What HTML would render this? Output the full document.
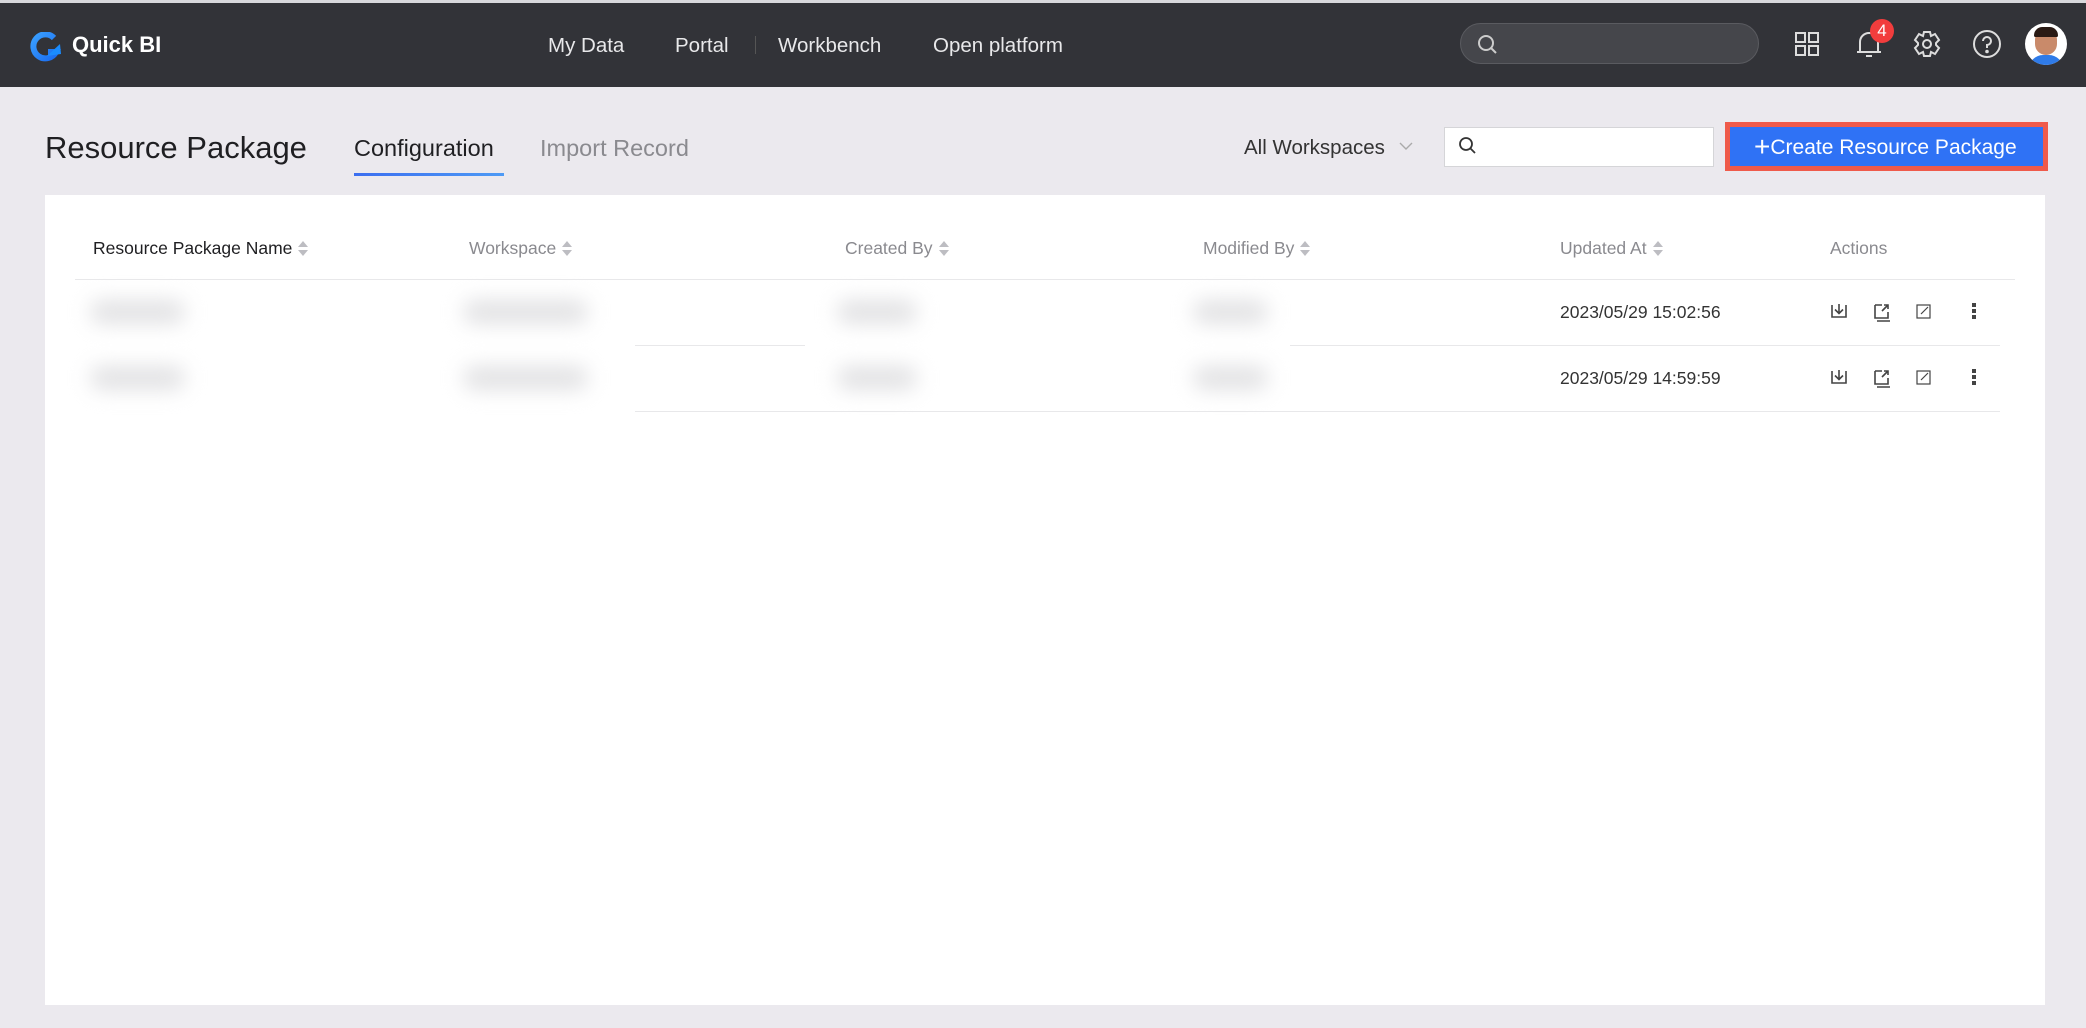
<!DOCTYPE html>
<html><head><meta charset="utf-8">
<style>
*{margin:0;padding:0;box-sizing:border-box}
html,body{width:2086px;height:1028px;overflow:hidden}
body{background:#ebe9ee;font-family:"Liberation Sans",sans-serif;position:relative}
.abs{position:absolute}
.top{left:0;top:0;width:2086px;height:87px;background:#323338;border-top:3px solid #d8d8dc}
.nav{color:#e8e8ea;font-size:20.5px;top:34px}
.hdr{font-size:17.5px;color:#8a8a8f;top:238px}
.sort{display:inline-block;vertical-align:middle;margin-left:6px;width:10px;height:18px;position:relative}
.sort:before{content:"";position:absolute;left:0;top:1px;border:5px solid transparent;border-bottom:6px solid #bdbdc2;border-top:0}
.sort:after{content:"";position:absolute;left:0;top:10px;border:5px solid transparent;border-top:6px solid #bdbdc2;border-bottom:0}
.blob{background:#e2e2e4;filter:blur(10px);height:24px;border-radius:12px}
.date{font-size:17.5px;color:#333;left:1560px}
.line{height:1px;background:#e8e8ea}
</style></head><body>
<div class="abs top"></div>
<svg class="abs" style="left:30px;top:32px" width="34" height="30" viewBox="0 0 34 30">
<defs><linearGradient id="g" x1="0" y1="0" x2="1" y2="1"><stop offset="0" stop-color="#3aa0ff"/><stop offset="1" stop-color="#1a6cf0"/></linearGradient></defs>
<path d="M24 6 A12 12 0 1 0 26 20 L18 20" fill="none" stroke="url(#g)" stroke-width="6"/>
<path d="M17 24 L30 12 L31 22 Z" fill="#1a8cff"/>
</svg>
<div class="abs" style="left:72px;top:32px;color:#fff;font-size:22px;font-weight:bold">Quick BI</div>
<div class="abs nav" style="left:548px">My Data</div>
<div class="abs nav" style="left:675px">Portal</div>
<div class="abs" style="left:755px;top:36px;width:1px;height:18px;background:#555"></div>
<div class="abs nav" style="left:778px">Workbench</div>
<div class="abs nav" style="left:933px">Open platform</div>
<div class="abs" style="left:1460px;top:23px;width:299px;height:41px;border-radius:21px;background:#45464b;border:1px solid #5a5b60"></div>
<svg class="abs" style="left:1477px;top:34px" width="22" height="22" viewBox="0 0 22 22"><circle cx="9" cy="9" r="7" fill="none" stroke="#ccc" stroke-width="2"/><path d="M14 14 L19 19" stroke="#ccc" stroke-width="2"/></svg>
<svg class="abs" style="left:1795px;top:32px" width="24" height="24" viewBox="0 0 24 24" fill="none" stroke="#ddd" stroke-width="2"><rect x="1" y="1" width="9" height="9"/><rect x="14" y="1" width="9" height="9"/><rect x="1" y="14" width="9" height="9"/><rect x="14" y="14" width="9" height="9"/></svg>
<svg class="abs" style="left:1856px;top:30px" width="26" height="30" viewBox="0 0 26 30" fill="none" stroke="#ddd" stroke-width="2"><path d="M4 22 L4 12 A9 9 0 0 1 22 12 L22 22 Z M1 22 L25 22 M10 26 L16 26"/></svg>
<div class="abs" style="left:1870px;top:19px;width:24px;height:24px;border-radius:12px;background:#f23d3d;color:#fff;font-size:17px;text-align:center;line-height:24px">4</div>
<svg class="abs" style="left:1913px;top:30px" width="28" height="28" viewBox="0 0 28 28" fill="none" stroke="#ddd" stroke-width="2"><path d="M11 2 L17 2 L18 6 L22 4 L26 10 L23 13 L23 15 L26 18 L22 24 L18 22 L17 26 L11 26 L10 22 L6 24 L2 18 L5 15 L5 13 L2 10 L6 4 L10 6 Z"/><circle cx="14" cy="14" r="4"/></svg>
<svg class="abs" style="left:1972px;top:29px" width="30" height="30" viewBox="0 0 30 30" fill="none" stroke="#ddd" stroke-width="2"><circle cx="15" cy="15" r="13"/><path d="M11 12 A4 4 0 1 1 15 16 L15 19"/><circle cx="15" cy="22.5" r="0.8" fill="#ddd"/></svg>
<div class="abs" style="left:2025px;top:23px;width:42px;height:42px;border-radius:21px;background:#fff;overflow:hidden">
<div class="abs" style="left:10px;top:6px;width:22px;height:26px;border-radius:11px;background:#c98a6a"></div>
<div class="abs" style="left:9px;top:4px;width:24px;height:10px;border-radius:10px 10px 2px 2px;background:#2a1a14"></div>
<div class="abs" style="left:4px;top:32px;width:34px;height:14px;border-radius:14px 14px 0 0;background:#2f7be8"></div>
</div>
<div class="abs" style="left:45px;top:130px;font-size:31px;color:#1f1f22;font-weight:500">Resource Package</div>
<div class="abs" style="left:354px;top:135px;font-size:23.5px;color:#1f1f22;font-weight:500">Configuration</div>
<div class="abs" style="left:354px;top:173px;width:150px;height:3px;background:linear-gradient(90deg,#3b6ef0,#4d9af5)"></div>
<div class="abs" style="left:540px;top:135px;font-size:23.5px;color:#8a8a8f">Import Record</div>
<div class="abs" style="left:1244px;top:136px;font-size:20.5px;color:#333">All Workspaces</div>
<svg class="abs" style="left:1398px;top:140px" width="16" height="12" viewBox="0 0 16 12"><path d="M2 3 L8 9 L14 3" fill="none" stroke="#aaa" stroke-width="1.4"/></svg>
<div class="abs" style="left:1444px;top:127px;width:270px;height:40px;background:#fff;border:1px solid #d5d5d8"></div>
<svg class="abs" style="left:1458px;top:136px" width="20" height="20" viewBox="0 0 20 20"><circle cx="8" cy="8" r="6" fill="none" stroke="#333" stroke-width="1.8"/><path d="M12.5 12.5 L17 17" stroke="#333" stroke-width="1.8"/></svg>
<div class="abs" style="left:1725px;top:122px;width:323px;height:49px;border:5px solid #ef5a4a;background:#2f72f5;color:#fff;font-size:21px;line-height:39px;padding-left:24px;white-space:nowrap">
<span style="font-size:28px;font-weight:200;vertical-align:-2px">+</span>Create Resource Package</div>
<div class="abs" style="left:45px;top:195px;width:2000px;height:810px;background:#fff"></div>
<div class="abs hdr" style="left:93px;color:#1f1f22">Resource Package Name<span class="sort"></span></div>
<div class="abs hdr" style="left:469px">Workspace<span class="sort"></span></div>
<div class="abs hdr" style="left:845px">Created By<span class="sort"></span></div>
<div class="abs hdr" style="left:1203px">Modified By<span class="sort"></span></div>
<div class="abs hdr" style="left:1560px">Updated At<span class="sort"></span></div>
<div class="abs hdr" style="left:1830px">Actions</div>
<div class="abs line" style="left:75px;top:279px;width:1940px"></div>
<div class="abs line" style="left:635px;top:345px;width:170px"></div>
<div class="abs line" style="left:1290px;top:345px;width:710px"></div>
<div class="abs line" style="left:635px;top:411px;width:1365px"></div>
<div class="abs blob" style="left:90px;top:300px;width:95px"></div>
<div class="abs blob" style="left:463px;top:300px;width:125px"></div>
<div class="abs blob" style="left:837px;top:300px;width:80px"></div>
<div class="abs blob" style="left:1193px;top:300px;width:75px"></div>
<div class="abs blob" style="left:90px;top:366px;width:95px"></div>
<div class="abs blob" style="left:463px;top:366px;width:125px"></div>
<div class="abs blob" style="left:837px;top:366px;width:80px"></div>
<div class="abs blob" style="left:1193px;top:366px;width:75px"></div>
<div class="abs date" style="top:302px">2023/05/29 15:02:56</div>
<div class="abs date" style="top:368px">2023/05/29 14:59:59</div>
<svg class="abs" style="left:1830px;top:302px" width="160" height="90" viewBox="0 0 160 90" fill="none" stroke="#444" stroke-width="1.6">
<g id="r"><path d="M2 3 L2 15 L16 15 L16 3 M9 2 L9 11 M5 7.5 L9 11.5 L13 7.5"/>
<path d="M45 3 L52 3 M45 3 L45 16 L58 16 L58 10 M52 9 L58 3 M54 3 L58 3 L58 7 M47 19 L60 19"/>
<rect x="87" y="3" width="13" height="13" stroke-width="1.2"/><path d="M91 12 L98 5" stroke-width="1.2"/></g>
<use href="#r" y="66"/>
<g fill="#444" stroke="none"><rect x="142" y="1" width="4" height="4"/><rect x="142" y="7" width="4" height="4"/><rect x="142" y="13" width="4" height="4"/>
<rect x="142" y="67" width="4" height="4"/><rect x="142" y="73" width="4" height="4"/><rect x="142" y="79" width="4" height="4"/></g>
</svg>
</body></html>
